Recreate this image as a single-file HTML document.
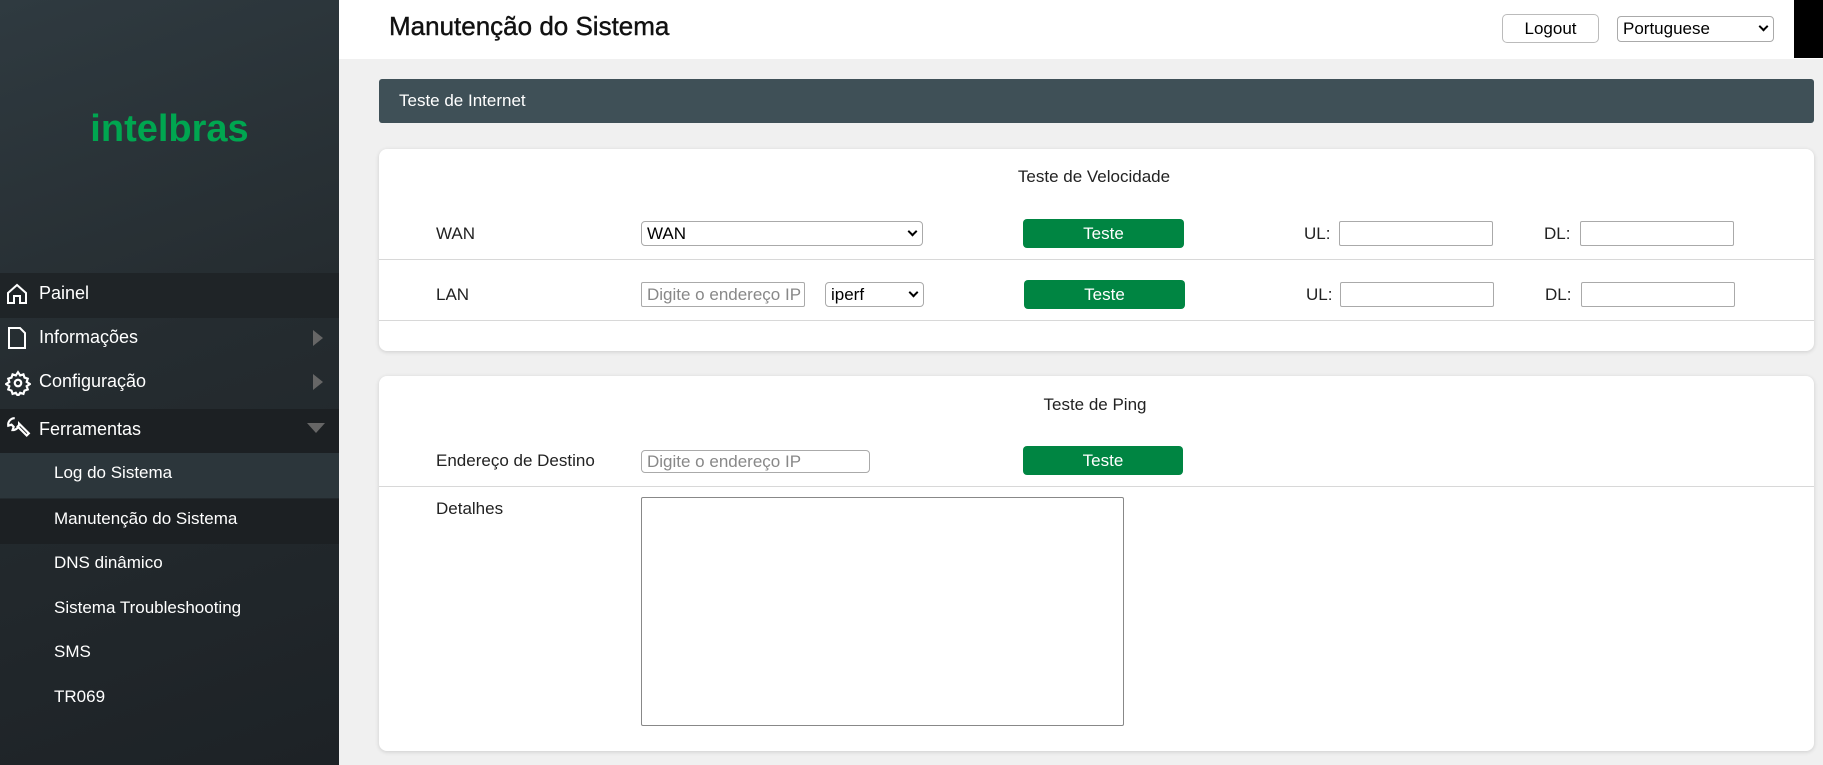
<!DOCTYPE html>
<html><head><meta charset="utf-8"><style>
*{box-sizing:border-box;margin:0;padding:0}
body{width:1823px;height:765px;overflow:hidden;background:#f0f0f0;font-family:"Liberation Sans",sans-serif;position:relative}
.a{position:absolute}
#side{left:0;top:0;width:339px;height:765px;background:linear-gradient(160deg,#2f3a40 0%,#252c30 45%,#1d2226 100%)}
.logo{left:0;width:339px;text-align:center;color:#00a650;font-weight:bold;font-size:38px;letter-spacing:0px;top:108px}
.mi{left:0;width:339px;height:45px;color:#fff;font-size:18px;line-height:45px;padding-left:39px}
.sub{padding-left:54px;font-size:17px}
.ic{position:absolute;left:5px;top:11px}
.arr{position:absolute;right:16px;top:15px;width:0;height:0;border-top:8px solid transparent;border-bottom:8px solid transparent;border-left:10px solid #666}
.arrd{position:absolute;right:14px;top:18px;border-left:9px solid transparent;border-right:9px solid transparent;border-top:10px solid #666}
#hdr{left:339px;top:0;width:1484px;height:59px;background:#fff}
.card{background:#fff;border-radius:8px;box-shadow:0 1px 4px rgba(0,0,0,.15);left:379px;width:1435px}
.t{font-size:17px;color:#222}
.sel,.inp{border:1px solid #aaa;border-radius:4px;background:#fff;font-size:17px;color:#000;height:25px;line-height:23px;padding-left:5px}
.inp{border-radius:2px}
.ph{color:#888}
.btn{background:#008542;color:#fff;border-radius:4px;text-align:center;font-size:17px;line-height:29px;height:29px}
.hr{height:1px;background:#d8d8d8}
.chev{position:absolute;right:6px;top:6px;width:7px;height:7px;border-right:2px solid #000;border-bottom:2px solid #000;transform:rotate(45deg)}
</style></head><body>
<div id="side" class="a">
<div class="a logo">intelbras</div>
<div class="a mi" style="top:273px;background:#1f2427;line-height:40px">
<svg class="ic" style="top:9px" width="24" height="24" viewBox="0 0 24 24" fill="none" stroke="#fff" stroke-width="2"><path d="M3 11 L12 3 L21 11 V21 H15 V14 H9 V21 H3 Z"/></svg>Painel</div>
<div class="a mi" style="top:315px">
<svg class="ic" width="24" height="24" viewBox="0 0 24 24" fill="none" stroke="#fff" stroke-width="2"><path d="M4 2 H15 L20 7 V22 H4 Z"/></svg>Informações<span class="arr"></span></div>
<div class="a mi" style="top:359px">
<svg class="ic" width="26" height="26" viewBox="0 0 24 24" fill="none" stroke="#fff" stroke-width="2"><circle cx="12" cy="12" r="3"/><path d="M12 2l2 3 3-1 1 3 3 1-1 3 3 2-3 2 1 3-3 1-1 3-3-1-2 3-2-3-3 1-1-3-3-1 1-3-3-2 3-2-1-3 3-1 1-3 3 1z"/></svg>Configuração<span class="arr"></span></div>
<div class="a mi" style="top:409px;background:#1c2023;line-height:40px">
<svg class="ic" style="top:7px" width="26" height="26" viewBox="0 0 24 24" fill="none" stroke="#fff" stroke-width="2"><path d="M9 2a6 6 0 0 0-6 7l3-1 2 2-1 3a6 6 0 0 0 6-6l9 9-2 2-9-9"/></svg>Ferramentas<span class="arr arrd" style="border-bottom:0;top:14px"></span></div>
<div class="a mi sub" style="top:453px;background:#2c363b;line-height:40px">Log do Sistema</div>
<div class="a mi sub" style="top:499px;background:#1c2023;line-height:40px">Manutenção do Sistema</div>
<div class="a mi sub" style="top:540px">DNS dinâmico</div>
<div class="a mi sub" style="top:585px">Sistema Troubleshooting</div>
<div class="a mi sub" style="top:629px">SMS</div>
<div class="a mi sub" style="top:674px">TR069</div>
</div>
<div id="hdr" class="a"></div>
<div class="a" style="left:389px;top:11px;font-size:26px;color:#111;-webkit-text-stroke:0.4px #111">Manutenção do Sistema</div>
<div class="a" style="left:1502px;top:14px;width:97px;height:29px;border:1px solid #bbb;border-radius:5px;background:#fff;text-align:center;line-height:27px;font-size:17px">Logout</div>
<div class="a sel" style="left:1617px;top:16px;width:157px;height:26px;border-radius:4px;line-height:24px">Portuguese<span class="chev"></span></div>
<div class="a" style="left:1794px;top:0;width:29px;height:58px;background:#000"></div>
<div class="a" style="left:379px;top:79px;width:1435px;height:44px;background:#3f5057;border-radius:3px;color:#fff;font-size:17px;line-height:44px;padding-left:20px">Teste de Internet</div>

<div class="a card" style="top:149px;height:202px"></div>
<div class="a t" style="left:898px;width:392px;text-align:center;top:167px">Teste de Velocidade</div>
<div class="a t" style="left:436px;top:224px">WAN</div>
<div class="a sel" style="left:641px;top:221px;width:282px">WAN<span class="chev"></span></div>
<div class="a btn" style="left:1023px;top:219px;width:161px">Teste</div>
<div class="a t" style="left:1304px;top:224px">UL:</div>
<div class="a inp" style="left:1339px;top:221px;width:154px"></div>
<div class="a t" style="left:1544px;top:224px">DL:</div>
<div class="a inp" style="left:1580px;top:221px;width:154px"></div>
<div class="a hr" style="left:379px;top:259px;width:1435px"></div>
<div class="a t" style="left:436px;top:285px">LAN</div>
<div class="a inp ph" style="left:641px;top:282px;width:164px;overflow:hidden;white-space:nowrap">Digite o endereço IP</div>
<div class="a sel" style="left:825px;top:282px;width:99px">iperf<span class="chev"></span></div>
<div class="a btn" style="left:1024px;top:280px;width:161px">Teste</div>
<div class="a t" style="left:1306px;top:285px">UL:</div>
<div class="a inp" style="left:1340px;top:282px;width:154px"></div>
<div class="a t" style="left:1545px;top:285px">DL:</div>
<div class="a inp" style="left:1581px;top:282px;width:154px"></div>
<div class="a hr" style="left:379px;top:320px;width:1435px"></div>

<div class="a card" style="top:376px;height:375px"></div>
<div class="a t" style="left:899px;width:392px;text-align:center;top:395px">Teste de Ping</div>
<div class="a t" style="left:436px;top:451px">Endereço de Destino</div>
<div class="a inp ph" style="left:641px;top:450px;width:229px;height:23px;line-height:21px;border-radius:4px">Digite o endereço IP</div>
<div class="a btn" style="left:1023px;top:446px;width:160px">Teste</div>
<div class="a hr" style="left:379px;top:486px;width:1435px"></div>
<div class="a t" style="left:436px;top:499px">Detalhes</div>
<div class="a" style="left:641px;top:497px;width:483px;height:229px;border:1px solid #888;border-radius:2px;background:#fff"></div>
</body></html>
